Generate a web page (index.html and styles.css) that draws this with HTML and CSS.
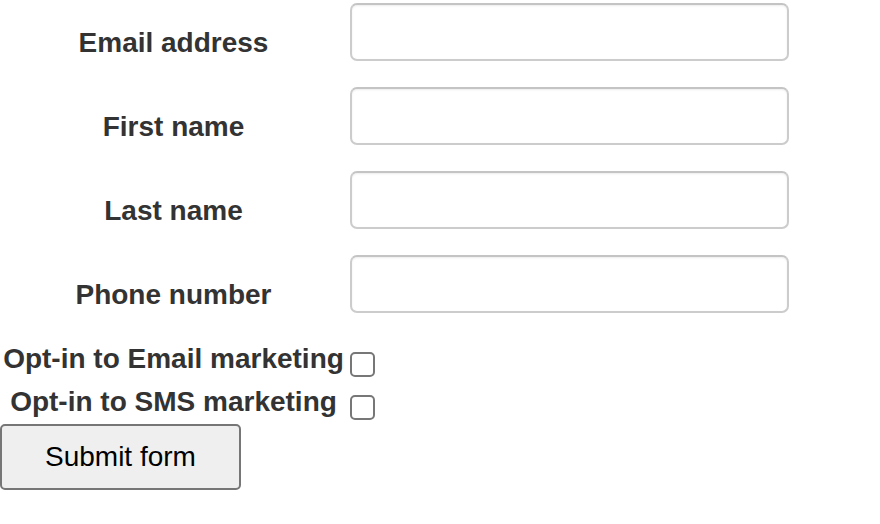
FILE: index.html
```html
<!DOCTYPE html>
<html lang="en">
<head>
    <meta charset="UTF-8">
    <title>Sign up</title>
    <link rel="stylesheet" href="styles.css">
</head>
<body>

<form class="signupForm">
    <table class="formTable">
        <tr>
            <th><label for="email">Email address</label></th>
            <td><input class="textInput" id="email" type="email"></td>
        </tr>
        <tr>
            <th><label for="firstName">First name</label></th>
            <td><input class="textInput" id="firstName" type="text"></td>
        </tr>
        <tr>
            <th><label for="lastName">Last name</label></th>
            <td><input class="textInput" id="lastName" type="text"></td>
        </tr>
        <tr>
            <th><label for="phone">Phone number</label></th>
            <td><input class="textInput" id="phone" type="tel"></td>
        </tr>
        <tr>
            <th><label for="optEmail">Opt-in to Email marketing</label></th>
            <td><input class="checkInput" id="optEmail" type="checkbox"></td>
        </tr>
        <tr>
            <th><label for="optSms">Opt-in to SMS marketing</label></th>
            <td><input class="checkInput" id="optSms" type="checkbox"></td>
        </tr>
    </table>
    <button class="submitButton" type="submit">Submit form</button>
</form>

</body>
</html>
```

FILE: styles.css
```css
html, body {
    margin: 0;
    padding: 0;
}
body {
    font-family: 'Liberation Sans', Arial, sans-serif;
    background-color: #ffffff;
    color: #333333;
}

.formTable {
    border-spacing: 2px;
    margin: 0;
}
.formTable th {
    width: 341px;
    padding: 1px;
    font-size: 28px;
    font-weight: bold;
    text-align: center;
    vertical-align: middle;
    white-space: nowrap;
}
.formTable td {
    padding: 1px;
    vertical-align: top;
}

.textInput {
    display: block;
    box-sizing: border-box;
    width: 439px;
    height: 58px;
    margin: 0 0 22px 2px;
    border: 2px solid #cccccc;
    border-top-color: #c4c4c4;
    border-radius: 7px;
    box-shadow: inset 0 1px 2px rgba(0, 0, 0, 0.08);
    background-color: #ffffff;
    font-size: 24px;
    padding: 0 10px;
    outline: none;
}

.checkInput {
    display: block;
    -webkit-appearance: none;
    appearance: none;
    box-sizing: border-box;
    width: 25px;
    height: 25px;
    margin: 13px 0 1px 2px;
    border: 2px solid #777777;
    border-radius: 5px;
    background-color: #ffffff;
}

.submitButton {
    display: block;
    box-sizing: border-box;
    height: 66px;
    margin: 0;
    padding: 0 43px;
    font-family: 'Liberation Sans', Arial, sans-serif;
    font-size: 28px;
    color: #000000;
    background-color: #efefef;
    border: 2px solid #767676;
    border-radius: 5px;
    cursor: pointer;
}
.submitButton:hover {
    background-color: #e5e5e5;
}
```
